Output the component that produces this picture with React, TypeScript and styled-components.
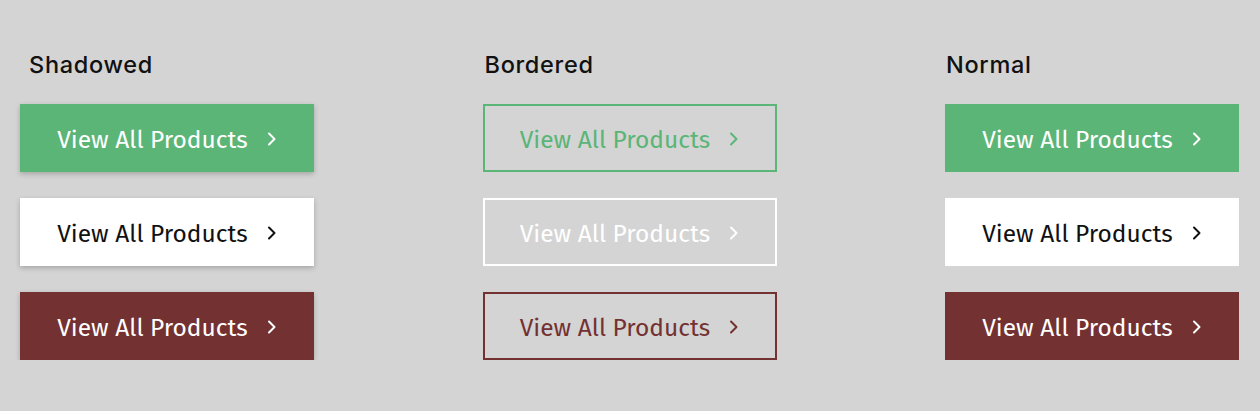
import React from "react";
import styled, { createGlobalStyle, css } from "styled-components";

const GlobalStyle = createGlobalStyle`
  body {
    margin: 0;
    background: #d4d4d4;
    font-family: "Noto Sans", "Liberation Sans", sans-serif;
  }
`;

type Tone = "green" | "white" | "maroon";
type Variant = "shadowed" | "bordered" | "normal";

const colors: Record<Tone, string> = {
  green: "#5ab577",
  white: "#ffffff",
  maroon: "#733131",
};

const Page = styled.div`
  display: grid;
  grid-template-columns: repeat(3, 294px);
  column-gap: 168.5px;
  padding: 51px 0 0 20px;
`;

const Column = styled.div`
  display: flex;
  flex-direction: column;
  gap: 26px;
`;

const Heading = styled.h2<{ $indent: number }>`
  margin: 0 0 -1px ${(p) => p.$indent}px;
  font-family: "Inter", "Liberation Sans", sans-serif;
  font-weight: 500;
  font-size: 23.5px;
  letter-spacing: 0.7px;
  line-height: 28px;
  color: #111;
`;

const Button = styled.button<{ $variant: Variant; $tone: Tone }>`
  display: flex;
  align-items: center;
  justify-content: center;
  gap: 19px;
  width: 294px;
  height: 68px;
  border: none;
  padding: 2px 0 0;
  font-family: "Fira Sans", "Noto Sans", sans-serif;
  font-weight: 400;
  font-size: 24.5px;
  cursor: pointer;

  ${(p) =>
    p.$variant === "bordered"
      ? css`
          background: transparent;
          border: 2px solid ${colors[p.$tone]};
          color: ${colors[p.$tone]};
        `
      : css`
          background: ${colors[p.$tone]};
          color: ${p.$tone === "white" ? "#111" : "#fff"};
        `}

  ${(p) =>
    p.$variant === "shadowed" &&
    css`
      box-shadow: 0 2px 5px rgba(0, 0, 0, 0.22);
    `}
`;

const Chevron = () => (
  <svg width="10" height="14" viewBox="0 0 10 14" fill="none">
    <polyline
      points="2,1.5 7.5,7 2,12.5"
      stroke="currentColor"
      strokeWidth="2"
      strokeLinecap="round"
      strokeLinejoin="round"
    />
  </svg>
);

const columns: { title: string; variant: Variant; indent: number }[] = [
  { title: "Shadowed", variant: "shadowed", indent: 9 },
  { title: "Bordered", variant: "bordered", indent: 2 },
  { title: "Normal", variant: "normal", indent: 1 },
];

const tones: Tone[] = ["green", "white", "maroon"];

export default function App() {
  return (
    <>
      <GlobalStyle />
      <Page>
        {columns.map((col) => (
          <Column key={col.title}>
            <Heading $indent={col.indent}>{col.title}</Heading>
            {tones.map((tone) => (
              <Button key={tone} $variant={col.variant} $tone={tone}>
                View All Products
                <Chevron />
              </Button>
            ))}
          </Column>
        ))}
      </Page>
    </>
  );
}
